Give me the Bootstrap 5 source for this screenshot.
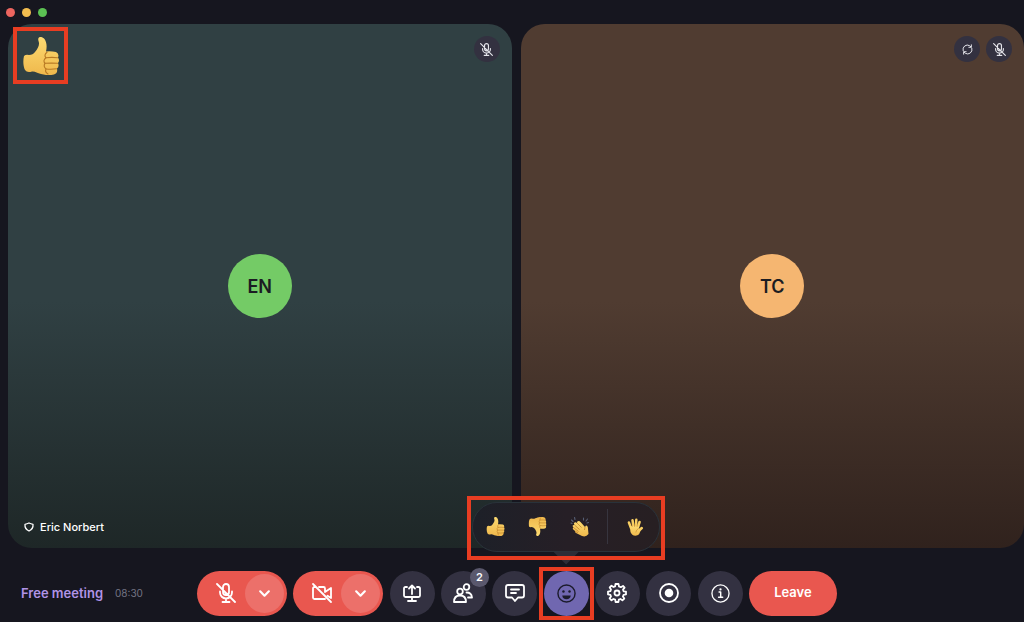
<!DOCTYPE html>
<html lang="en" data-bs-theme="dark">
<head>
<meta charset="utf-8">
<meta name="viewport" content="width=device-width, initial-scale=1">
<title>Free meeting</title>
<link href="https://cdn.jsdelivr.net/npm/bootstrap@5.3.0/dist/css/bootstrap.min.css" rel="stylesheet">
<style>
body{background:#16161f;font-family:Inter,"Liberation Sans",sans-serif;color:#fff}
.titlebar{height:24px;padding-left:6px;gap:7px}
.dot{width:9px;height:9px;border-radius:50%}
.stage{padding-left:8px;gap:9px}
.tile{border-radius:24px;flex:1 1 0}
.tile-teal{background:linear-gradient(#304043 53%,#1e2727)}
.tile-brown{background:linear-gradient(#503c31 53%,#30221d)}
.avatar{width:64px;height:64px;border-radius:50%;font-size:18px;font-weight:600;color:#1b1c22}
.avatar-green{background:#74cb66}
.avatar-orange{background:#f5b671}
.tile-tools{top:12px;right:12px;gap:6px}
.chip{width:26px;height:26px;border-radius:50%;background:#333140;color:#e4e4ea}
.tile-name{left:16px;bottom:13px;gap:6px;font-size:11px;line-height:16px;font-weight:500}
.marker{border:4px solid #e83d22;pointer-events:none}
.marker-raised{left:5px;top:3px;width:55px;height:57px}
.marker-menu{left:50%;bottom:56px;transform:translateX(-50%);width:198px;height:64px}
.marker-react{inset:-4px -5px}
.controls{display:grid;grid-template-columns:1fr 640px 1fr;height:74px;padding:17px 11px 1px 21px;align-items:center}
.meeting{font-size:13px;line-height:20px;font-weight:600;color:#b093e6;text-decoration:none}
.clock{font-size:10px;color:#747484}
.round{width:45px;height:45px;border:0;border-radius:50%;padding:0;background:#333141;color:#fff}
.round-active{background:#7067b0;color:#1b1b2c}
.split{width:90px;height:45px;border-radius:23px;background:#e9574f}
.split button{border:0;padding:0;background:none;color:#fff;flex:1 1 0;height:100%}
.split .more{flex:0 0 39px;height:39px;margin-right:3px;border-radius:50%;background:#ec706a}
.split .main{padding-left:9px}
.leave{width:88px;height:45px;border:0;border-radius:23px;background:#e9574f;color:#fff;font-size:13px;font-weight:600}
.count{width:19px;height:19px;right:-3px;top:-3px;border-radius:50%;background:#5a586d;font-size:11px;font-weight:600;line-height:19px}
.reactions{left:50%;bottom:64px;transform:translateX(-50%);width:188px;height:50px;border-radius:25px;border:1px solid #29323a;background:linear-gradient(90deg,#1d2028,#261f26 50%,#271f22);padding:0 14px 0 13px}
.reactions button{border:0;padding:0;background:none;width:20px;height:20px;line-height:0}
.faces{gap:22px}
.caret{left:50%;bottom:51px;transform:translateX(-50%);width:26px;height:13px;clip-path:polygon(0 0,100% 0,50% 100%);background:#2c2d37}
.rule{width:1px;height:35px;background:#37353f}
svg{display:block;overflow:visible}
.ln{fill:none;stroke:currentColor;stroke-width:1.8;stroke-linecap:round;stroke-linejoin:round}
</style>
</head>
<body class="d-flex flex-column min-vh-100">
<svg width="0" height="0" class="position-absolute" aria-hidden="true">
<defs>
<linearGradient id="skin" x1="0" y1="0" x2="0" y2="1"><stop offset="0" stop-color="#fddb71"/><stop offset="1" stop-color="#efb84c"/></linearGradient>
<symbol id="thumb" viewBox="0 0 36 38">
<path fill="url(#skin)" d="M1 19Q3 17 6 18Q10 18 12 15C15 11 17 8 15.500 4C14-1 19-1 21.500 2C24 6 24 10 23 14.500Q28 14 33 15Q36.500 17 35 20.500Q37 23.500 35 26Q36.500 29.500 34 31.500Q35 36 31 37.500Q25 39 18 37C14 36 12 34 9 34.500Q4 36 2 33C0 29 0 23 1 19Z"/>
<g fill="none" stroke="#b87924" stroke-width="1.100" stroke-linecap="round"><path d="M23 20.800Q29 20 34.500 20.800M22 26.300Q29 26 34.500 26.300M23 32Q29 32.500 33.500 31.800"/><path d="M24 15.300Q20.500 18 23 20.800Q19.500 23.500 22 26.300Q20 29 23 32Q21.500 35 25 37"/></g>
</symbol>
<symbol id="mic-off" viewBox="0 0 20 20"><g class="ln"><path d="M7 8V4A3 3 0 0 1 13 4V9A3 3 0 0 1 7 9ZM4 8.500V9.500A6 6 0 0 0 16 9.500V8.500M10 15.500V19M6.500 19H13.500M1 1L19 19"/></g></symbol>
<symbol id="chev" viewBox="0 0 12 8"><path class="ln" style="stroke-width:2" d="M2 2L6 6L10 2"/></symbol>
</defs>
</svg>

<header class="titlebar d-flex align-items-center">
<span class="dot" style="background:#ed655f"></span><span class="dot" style="background:#f3bd4f"></span><span class="dot" style="background:#5cc153"></span>
</header>

<main class="stage d-flex flex-grow-1">
<section class="tile tile-teal position-relative d-flex align-items-center justify-content-center">
<div class="avatar avatar-green d-flex align-items-center justify-content-center">EN</div>
<div class="marker marker-raised position-absolute d-flex align-items-center justify-content-center"><svg width="36" height="38" role="img" aria-label="Thumbs up"><use href="#thumb"/></svg></div>
<div class="tile-tools position-absolute d-flex"><span class="chip d-flex align-items-center justify-content-center"><svg width="13" height="13"><use href="#mic-off"/></svg></span></div>
<div class="tile-name position-absolute d-flex align-items-center">
<svg width="10" height="10" viewBox="0 0 10 10"><path class="ln" style="stroke-width:1.300" d="M5 1Q7 2 9 2.300Q9.500 7 5 9Q.5 7 1 2.300Q3 2 5 1Z"/></svg>Eric Norbert</div>
</section>
<section class="tile tile-brown position-relative d-flex align-items-center justify-content-center">
<div class="avatar avatar-orange d-flex align-items-center justify-content-center">TC</div>
<div class="tile-tools position-absolute d-flex">
<span class="chip d-flex align-items-center justify-content-center"><svg width="11" height="11" viewBox="0 0 20 20"><path class="ln" d="M2 12A8 8 0 0 1 14 3.200L16.500 5.500M17 1.500V6H12.500M18 8A8 8 0 0 1 6 16.800L3.500 14.500M3 18.500V14H7.500"/></svg></span>
<span class="chip d-flex align-items-center justify-content-center"><svg width="13" height="13"><use href="#mic-off"/></svg></span>
</div>
</section>
</main>

<footer class="controls">
<div class="d-flex align-items-center">
<a href="#" class="meeting">Free meeting</a><span class="clock ms-2 ps-1">08:30</span>
</div>
<div class="d-flex align-items-center justify-content-between">
<div class="split d-flex align-items-center">
<button class="main d-flex align-items-center justify-content-center" aria-label="Unmute"><svg width="20" height="20"><use href="#mic-off"/></svg></button>
<button class="more d-flex align-items-center justify-content-center" aria-label="Audio options"><svg width="13" height="9"><use href="#chev"/></svg></button>
</div>
<div class="split d-flex align-items-center">
<button class="main d-flex align-items-center justify-content-center" aria-label="Start video"><svg width="20" height="20" viewBox="0 0 20 20"><path class="ln" d="M3.500 4H2.500Q1 4 1 5.500V14.500Q1 16 2.500 16H13M7 4H11.500Q13 4 13 5.500V9L19 5V15L15.500 12.700M1 1L19 19"/></svg></button>
<button class="more d-flex align-items-center justify-content-center" aria-label="Video options"><svg width="13" height="9"><use href="#chev"/></svg></button>
</div>
<button class="round d-flex align-items-center justify-content-center" aria-label="Share screen"><svg width="18" height="18" viewBox="0 0 18 18"><path class="ln" d="M4 3H2.500Q1 3 1 4.500V11.500Q1 13 2.500 13H15.500Q17 13 17 11.500V4.500Q17 3 15.500 3H14M9 10V1.500M6 4.500L9 1.500L12 4.500M9 13V17M5 17H13"/></svg></button>
<button class="round position-relative d-flex align-items-center justify-content-center" aria-label="Participants, 2"><svg width="20" height="20" viewBox="0 0 20 20"><path class="ln" d="M1 19Q1 12.500 7 12.500T13 19ZM13.500 9.500Q18.500 9.500 19 14.500H15"/><circle class="ln" cx="7" cy="8.500" r="2.800"/><circle class="ln" cx="13.500" cy="4" r="2.800"/></svg><span class="count position-absolute">2</span></button>
<button class="round d-flex align-items-center justify-content-center" aria-label="Chat"><svg width="20" height="20" viewBox="0 0 20 20"><path class="ln" d="M3 2H17Q19 2 19 4V12.500Q19 14.500 17 14.500H13L10 18L7 14.500H3Q1 14.500 1 12.500V4Q1 2 3 2ZM6 6.500H14M6 10H11"/></svg></button>
<div class="position-relative">
<button class="round round-active d-flex align-items-center justify-content-center" aria-label="Reactions" aria-expanded="true"><svg width="19" height="19" viewBox="0 0 20 20"><circle class="ln" style="stroke-width:1.500" cx="10" cy="10" r="9"/><circle cx="6.800" cy="8" r="1.300" fill="currentColor"/><circle cx="13.200" cy="8" r="1.300" fill="currentColor"/><path fill="currentColor" d="M5.500 12H14.500Q14 16 10 16T5.500 12Z"/></svg></button>
<div class="caret position-absolute"></div>
<div class="reactions position-absolute d-flex align-items-center justify-content-between">
<div class="faces d-flex">
<button aria-label="Thumbs up"><svg width="19" height="19"><use href="#thumb"/></svg></button>
<button aria-label="Thumbs down"><svg width="19" height="19" viewBox="0 0 36 38"><g transform="translate(0 38) scale(1 -1)"><use href="#thumb" width="36" height="38"/></g></svg></button>
<button aria-label="Clap"><svg width="20" height="20" viewBox="0 0 20 20"><path fill="url(#skin)" d="M2.500 9Q3 7.500 4.500 8L3.800 6.500Q5 4.500 7 6L7.300 4.500Q9 3.500 10.500 5L15 10L16 8.500Q18 8.500 18 12L18.500 17Q16 20.500 12 19L6 16Q4.500 15 5 14L2.800 12Q2.500 11 3.500 10.500Z"/><path fill="none" stroke="#b87924" stroke-width=".7" d="M4.500 8L9.500 12.500M7 6L11.500 10.500M3.500 10.500L8.500 14.500M5 14L8 16M15 10L14.500 13"/><path class="ln" style="stroke:#555d73;stroke-width:1.100" d="M1.500 3L3 4.500M4.500.5L5 2.500M1 6L2 6.500M13.500 1V3M17.500 2L16 4M18.500 5.500L17 6"/></svg></button>
</div>
<span class="rule"></span>
<button aria-label="Raise hand"><svg width="20" height="20" viewBox="0 0 20 20"><g fill="none" stroke="#f9cf62" stroke-linecap="round"><path stroke-width="2.500" d="M6 11L3.900 5.500M8.300 9L7.500 3.200M10.900 9L11.300 2.800M13 10L14.600 5"/><path stroke-width="2.500" d="M13 14.500L16.800 11"/></g><path fill="url(#skin)" d="M4.800 9L14.200 9L13.800 12L16 11.500Q15 18 11.500 18.600Q7 19.200 5.500 15Z"/><path fill="none" stroke="#b87924" stroke-width=".5" d="M6.900 7.500L7.200 10M9.600 7V10M12.300 7.500L12.100 10M13.500 11.500Q11 13 10.800 15.500"/></svg></button>
</div>
<span class="marker marker-menu position-absolute"></span>
<span class="marker marker-react position-absolute"></span>
</div>
<button class="round d-flex align-items-center justify-content-center" aria-label="Settings"><svg width="20" height="20" viewBox="0 0 20 20"><path class="ln" d="M8.500 1H11.500L12 3.500L13.800 4.200L16 2.900L17.600 4.600L16 6.600L16.600 8.300L19 8.600V11.400L16.600 11.800L15.900 13.600L17.300 15.600L15.400 17.400L13.500 16L11.800 16.600L11.400 19H8.600L8.200 16.600L6.500 16L4.500 17.300L2.600 15.400L4 13.500L3.400 11.800L1 11.400V8.600L3.400 8.200L4 6.500L2.700 4.500L4.500 2.700L6.500 4L8.100 3.400Z"/><circle class="ln" cx="10" cy="10" r="2.500"/></svg></button>
<button class="round d-flex align-items-center justify-content-center" aria-label="Record"><svg width="20" height="20" viewBox="0 0 20 20"><circle class="ln" cx="10" cy="10" r="9"/><circle cx="10" cy="10" r="4.300" fill="currentColor"/></svg></button>
<button class="round d-flex align-items-center justify-content-center" aria-label="Info"><svg width="19" height="19" viewBox="0 0 20 20"><circle class="ln" style="stroke-width:1.400" cx="10" cy="10" r="9"/><path class="ln" style="stroke-width:1.500" d="M8.500 8.500H10.200V14M8 14H12.300"/><circle cx="10" cy="5.700" r="1.200" fill="currentColor"/></svg></button>
<button class="leave">Leave</button>
</div>
</footer>
<script src="https://cdn.jsdelivr.net/npm/bootstrap@5.3.0/dist/js/bootstrap.bundle.min.js"></script>
</body>
</html>
